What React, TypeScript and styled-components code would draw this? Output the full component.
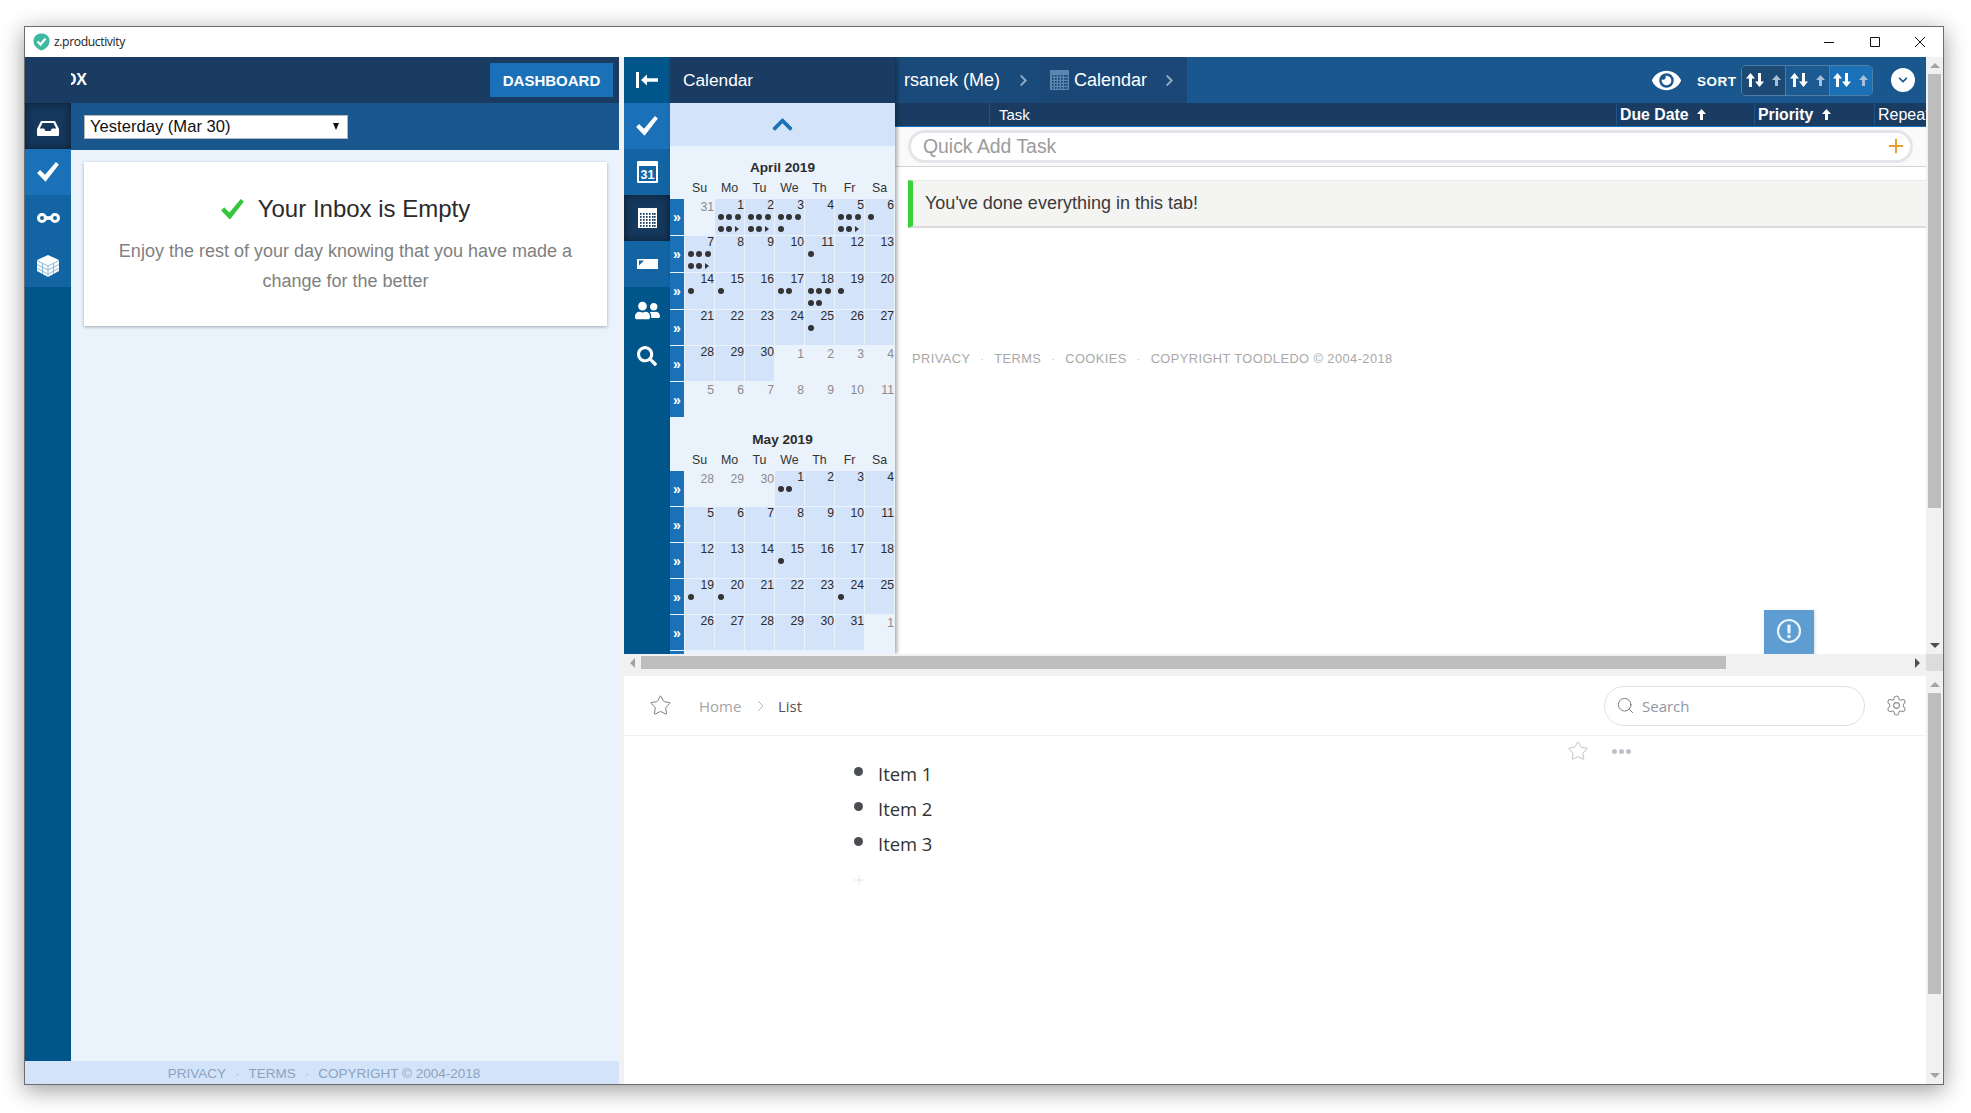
import React from 'react'
import styled, { createGlobalStyle } from 'styled-components'
import { FaEye, FaChevronUp, FaChevronRight, FaChevronDown, FaUserFriends, FaSearch } from 'react-icons/fa'
import { Star, Search, Settings, Plus } from 'lucide-react'

const GlobalStyle = createGlobalStyle`
  html, body {
    margin: 0;
    height: 100%;
    background: #fff;
    overflow: hidden;
  }
  body {
    font-family: "Liberation Sans", Arial, sans-serif;
  }
`

const navy = '#1a3c62'
const mid = '#1a578e'
const bright = '#1a71b8'
const railBlue = '#00568a'
const pale = '#eaf2fc'
const paleBlue = '#d3e3f9'

const Page = styled.div`
  padding: 26px 0 0 24px;
`

const Window = styled.div`
  width: 1918px;
  height: 1057px;
  border: 1px solid #6d6d6d;
  background: #fff;
  box-shadow: 0 5px 22px rgba(0, 0, 0, 0.4);
  display: flex;
  flex-direction: column;
`

const TitleBar = styled.div`
  height: 30px;
  flex: none;
  display: flex;
  align-items: center;
  padding-left: 8px;
`

const AppName = styled.span`
  font-family: "Open Sans", sans-serif;
  font-size: 12.2px;
  letter-spacing: -0.4px;
  color: #222;
  margin: -2px 0 0 4px;
`

const WinButtons = styled.div`
  margin-left: auto;
  display: flex;
`

const WinButton = styled.div`
  width: 45.5px;
  height: 30px;
  display: flex;
  align-items: center;
  justify-content: center;
`

const Body = styled.div`
  flex: 1;
  min-height: 0;
  display: flex;
  background: #f1f1f1;
`

const LeftPanel = styled.section`
  width: 594px;
  flex: none;
  margin-right: 5px;
  display: flex;
  flex-direction: column;
  background: ${pale};
`

const LeftHeader = styled.header`
  height: 46px;
  flex: none;
  background: ${navy};
  display: flex;
  align-items: center;
  padding: 0 6px 0 46px;
`

const ClippedTitle = styled.div`
  width: 16px;
  overflow: hidden;
  display: flex;
  justify-content: flex-end;
  color: #fff;
  font-weight: bold;
  font-size: 16px;
`

const DashboardButton = styled.button`
  margin-left: auto;
  width: 123px;
  height: 34px;
  border: 0;
  padding: 0;
  background: ${bright};
  color: #fff;
  font-family: inherit;
  font-weight: bold;
  font-size: 15px;
`

const LeftMiddle = styled.div`
  flex: 1;
  min-height: 0;
  display: flex;
`

const Rail = styled.nav`
  width: 46px;
  flex: none;
  background: ${railBlue};
  display: flex;
  flex-direction: column;
`

const RailItem = styled.div<{ $tone?: 'active' | 'bright' | 'soft'; $drop?: boolean }>`
  height: 46px;
  flex: none;
  box-sizing: border-box;
  padding-top: ${p => (p.$drop ? '4px' : '0')};
  display: flex;
  align-items: center;
  justify-content: center;
  color: #fff;
  background: ${p =>
    p.$tone === 'active' ? '#15385d' : p.$tone === 'bright' ? bright : p.$tone === 'soft' ? '#1264a3' : railBlue};
  box-shadow: ${p => (p.$tone === 'active' ? 'inset 0 0 8px rgba(0, 0, 0, 0.5)' : 'none')};
`

const LeftContent = styled.div`
  flex: 1;
  min-width: 0;
  display: flex;
  flex-direction: column;
`

const SubBar = styled.div`
  height: 47px;
  flex: none;
  background: ${mid};
  display: flex;
  align-items: center;
  padding-left: 13px;
`

const FakeSelect = styled.div`
  width: 256px;
  height: 22px;
  border: 1px solid #b5b5b5;
  background: #fff;
  color: #111;
  font-size: 16.6px;
  display: flex;
  align-items: center;
  padding: 0 1px 0 5px;
`

const SelectArrow = styled.span`
  margin-left: auto;
  margin-right: 7px;
  width: 0;
  height: 0;
  border-left: 3.5px solid transparent;
  border-right: 3.5px solid transparent;
  border-top: 7px solid #111;
`

const EmptyCard = styled.div`
  margin: 12px 12px 0 13px;
  height: 164px;
  background: #fff;
  box-shadow: 0 1px 3px rgba(0, 0, 0, 0.3);
  text-align: center;
  padding-top: 31px;
  box-sizing: border-box;
`

const EmptyTitle = styled.div`
  font-size: 24px;
  line-height: 32px;
  color: #2b2b2b;
  display: flex;
  justify-content: center;
  align-items: center;
  gap: 14px;
  margin-bottom: 11px;
`

const EmptyText = styled.div`
  font-size: 18px;
  line-height: 30px;
  color: #808080;
`

const FooterBar = styled.footer`
  height: 23px;
  flex: none;
  box-sizing: border-box;
  background: ${paleBlue};
  display: flex;
  align-items: center;
  justify-content: center;
  padding: 1px 0 0 4px;
  font-size: 13.5px;
  color: #8aa3c0;
`

const FooterDot = styled.span<{ $gap: number }>`
  margin: 0 ${p => p.$gap}px;
  opacity: 0.6;
`

const RightColumn = styled.div`
  flex: 1;
  min-width: 0;
  display: flex;
  flex-direction: column;
`

const TopSplit = styled.div`
  height: 597px;
  flex: none;
  display: flex;
  overflow: hidden;
`

const CalendarPanel = styled.aside`
  width: 225px;
  flex: none;
  background: ${pale};
  position: relative;
  z-index: 1;
  box-shadow: 2px 0 4px rgba(0, 0, 0, 0.35);
  overflow: hidden;
`

const CalendarHeader = styled.div`
  height: 46px;
  background: ${navy};
  color: #fff;
  font-size: 17.3px;
  display: flex;
  align-items: center;
  padding-left: 13px;
`

const CollapseBand = styled.div`
  height: 43px;
  background: ${paleBlue};
  display: flex;
  align-items: center;
  justify-content: center;
  color: ${bright};
`

const MonthBlock = styled.div`
  padding-top: 13px;
`

const MonthTitle = styled.div`
  height: 18px;
  line-height: 18px;
  text-align: center;
  font-weight: bold;
  font-size: 13.6px;
  color: #2c2c2c;
`

const DayGrid = styled.div`
  display: grid;
  grid-template-columns: 14px repeat(7, 29px);
  gap: 1px;
  margin-bottom: 1px;
`

const WeekdayName = styled.div`
  height: 18px;
  line-height: 18px;
  margin: 2px 0 1px;
  text-align: center;
  font-size: 12.4px;
  color: #333;
`

const WeekJump = styled.div`
  background: ${bright};
  color: #fff;
  font-weight: bold;
  font-size: 14px;
  display: flex;
  align-items: center;
  justify-content: center;
`

const DayCell = styled.div<{ $other: boolean }>`
  min-height: 35px;
  background: ${p => (p.$other ? pale : paleBlue)};
  color: ${p => (p.$other ? '#8a8a8a' : '#2c2c2c')};
  font-size: 12.2px;
  line-height: 12px;
  text-align: right;
  padding-top: ${p => (p.$other ? '2px' : '0')};
  box-sizing: border-box;
`

const Dots = styled.div`
  display: flex;
  flex-wrap: wrap;
  width: 26px;
  padding-left: 3px;
`

const Dot = styled.i`
  width: 6px;
  height: 6px;
  margin: 3px 2.3px 3px 0;
  border-radius: 50%;
  background: #333;
`

const MoreMark = styled.i`
  width: 0;
  height: 0;
  margin: 3px 0;
  border-left: 4px solid #333;
  border-top: 3px solid transparent;
  border-bottom: 3px solid transparent;
`

const Main = styled.main`
  flex: 1;
  min-width: 0;
  background: #fff;
  position: relative;
  overflow: hidden;
`

const MainHeader = styled.div`
  height: 46px;
  background: ${mid};
  display: flex;
  align-items: center;
  color: #fff;
`

const Crumb = styled.div<{ $bg: string }>`
  width: 146px;
  height: 100%;
  box-sizing: border-box;
  padding-left: 9px;
  background: ${p => p.$bg};
  display: flex;
  align-items: center;
  font-size: 18px;
  white-space: nowrap;
`

const CrumbLabel = styled.span`
  margin-left: 5px;
`

const CrumbArrow = styled(FaChevronRight)<{ $gap: number }>`
  margin-left: ${p => p.$gap}px;
  color: #8fa9c4;
`

const HeaderTools = styled.div`
  margin-left: auto;
  padding-right: 11px;
  display: flex;
  align-items: center;
`

const SortLabel = styled.span`
  font-weight: bold;
  font-size: 13.5px;
  letter-spacing: 0.5px;
  margin: 3px 4px 0 16px;
`

const SortGroup = styled.div`
  display: flex;
  border: 1px solid #4d7ea8;
  border-radius: 5px;
  overflow: hidden;
`

const SortButton = styled.div<{ $bg: string; $divided?: boolean }>`
  width: 43.5px;
  height: 29px;
  box-sizing: border-box;
  background: ${p => p.$bg};
  border-left: ${p => (p.$divided ? '1px solid #4d7ea8' : '0')};
  display: flex;
  align-items: center;
  justify-content: center;
  gap: 8px;
`

const RoundMenu = styled.div`
  width: 24px;
  height: 24px;
  margin-left: 18px;
  border-radius: 50%;
  background: #fff;
  color: ${mid};
  display: flex;
  align-items: center;
  justify-content: center;
`

const ColumnRow = styled.div`
  height: 24px;
  background: ${navy};
  border-bottom: 1px solid ${bright};
  box-sizing: border-box;
  display: grid;
  grid-template-columns: 94px 627px 138px 120px 1fr;
  color: #fff;
  overflow: hidden;
  white-space: nowrap;
`

const ColumnCell = styled.div<{ $bold?: boolean; $inset: number; $size: number }>`
  border-left: 1px solid #1f5488;
  padding-left: ${p => p.$inset}px;
  font-weight: ${p => (p.$bold ? 'bold' : 'normal')};
  font-size: ${p => p.$size}px;
  line-height: 23px;
  display: flex;
  align-items: center;
  gap: 9px;
  &:first-child {
    border-left: 0;
  }
`

const QuickAddBar = styled.div`
  height: 40px;
  box-sizing: border-box;
  background: #fafafa;
  border-bottom: 1px solid #d4d4d4;
  padding: 3px 13px;
`

const QuickAdd = styled.div`
  height: 33px;
  box-sizing: border-box;
  border: 3px solid #e3e5ea;
  border-radius: 17px;
  background: #fff;
  display: flex;
  align-items: center;
  padding: 0 3px 1px 12px;
  font-size: 19.4px;
  color: #9b9b9b;
`

const QuickPlus = styled(Plus)`
  margin-left: auto;
  color: #e8a030;
`

const DoneMessage = styled.div`
  margin: 13px 0 0 13px;
  height: 48px;
  box-sizing: border-box;
  background: #f4f4f3;
  border-left: 5px solid #3bd13b;
  border-top: 1px solid #e8e8e8;
  border-bottom: 2px solid #dcdcdc;
  padding-left: 12px;
  display: flex;
  align-items: center;
  font-size: 18px;
  color: #3a3a3a;
`

const MainFooter = styled.div`
  margin: 123px 0 0 17px;
  font-size: 12.8px;
  letter-spacing: 0.45px;
  color: #a8a8a8;
`

const AlertTab = styled.div`
  position: absolute;
  right: 112px;
  bottom: 0;
  width: 50px;
  height: 44px;
  padding-bottom: 2px;
  box-sizing: border-box;
  background: #5d9dd2;
  box-shadow: 1px 1px 3px rgba(0, 0, 0, 0.15);
  display: flex;
  align-items: center;
  justify-content: center;
`

const VScroll = styled.div`
  width: 17px;
  flex: none;
  background: #f1f1f1;
  display: flex;
  flex-direction: column;
  align-items: center;
`

const ScrollEnd = styled.div`
  width: 17px;
  height: 17px;
  flex: none;
  display: flex;
  align-items: center;
  justify-content: center;
`

const VArrow = styled.i<{ $down?: boolean; $dim?: boolean }>`
  width: 0;
  height: 0;
  border-left: 5px solid transparent;
  border-right: 5px solid transparent;
  ${p => (p.$down ? 'border-top' : 'border-bottom')}: 5px solid ${p => (p.$dim ? '#a3a3a3' : '#505050')};
`

const HArrow = styled.i<{ $right?: boolean }>`
  width: 0;
  height: 0;
  border-top: 5px solid transparent;
  border-bottom: 5px solid transparent;
  ${p => (p.$right ? 'border-left' : 'border-right')}: 5px solid ${p => (p.$right ? '#505050' : '#a3a3a3')};
`

const VThumb = styled.div<{ $size: number }>`
  width: 13px;
  height: ${p => p.$size}px;
  flex: none;
  margin-bottom: auto;
  background: #bdbdbd;
`

const HScroll = styled.div`
  height: 22px;
  flex: none;
  background: #f1f1f1;
  display: flex;
`

const HTrack = styled.div`
  flex: 1;
  height: 17px;
  display: flex;
  align-items: center;
`

const HThumb = styled.div`
  width: 1085px;
  height: 13px;
  margin-right: auto;
  background: #bdbdbd;
`

const ScrollCorner = styled.div`
  width: 17px;
  height: 17px;
  background: #dcdcdc;
`

const BottomSplit = styled.div`
  flex: 1;
  min-height: 0;
  display: flex;
`

const NotesPane = styled.div`
  flex: 1;
  min-width: 0;
  background: #fff;
  font-family: "Open Sans", sans-serif;
`

const NotesBar = styled.div`
  height: 60px;
  box-sizing: border-box;
  border-bottom: 1px solid #f1f1f1;
  display: flex;
  align-items: center;
  padding: 0 18px 0 25px;
`

const FavoriteIcon = styled(Star)`
  margin-right: 27px;
  color: #777;
`

const Breadcrumb = styled.span<{ $current?: boolean }>`
  font-size: 15px;
  color: ${p => (p.$current ? '#555' : '#a5a5a5')};
`

const CrumbChevron = styled.svg`
  margin: 0 13.5px 0 16px;
`

const SearchPill = styled.div`
  margin-left: auto;
  width: 261px;
  height: 40px;
  box-sizing: border-box;
  border: 1px solid #e0e0e0;
  border-radius: 20px;
  display: flex;
  align-items: center;
  gap: 7px;
  padding-left: 11px;
  font-size: 15px;
  color: #8f98a3;
`

const GearIcon = styled(Settings)`
  margin-left: 20px;
  color: #8a8a8a;
`

const NotesBody = styled.div`
  display: flex;
`

const ItemList = styled.div`
  width: 713px;
  padding: 20px 0 0 230px;
`

const Item = styled.div`
  height: 35px;
  display: flex;
  align-items: center;
  gap: 15px;
  font-size: 18.4px;
  color: #333;
`

const Bullet = styled.i`
  width: 9px;
  height: 9px;
  margin-top: -4px;
  border-radius: 50%;
  background: #4a4d52;
`

const AddItem = styled(Plus)`
  margin: 10px 0 0 -4px;
  display: block;
  color: #dedede;
`

const PageActions = styled.div`
  display: flex;
  align-items: center;
  height: 30px;
  color: #bdbdbd;
`

const ActionDots = styled.span`
  display: flex;
  gap: 2px;
  margin-left: 23px;
`

const ActionDot = styled.i`
  width: 5px;
  height: 5px;
  border-radius: 50%;
  background: #bcc2c7;
`

type DayMark = { n: number; more?: boolean }

const aprilMarks: Record<number, DayMark> = {
  1: { n: 5, more: true },
  2: { n: 5, more: true },
  3: { n: 4 },
  5: { n: 5, more: true },
  6: { n: 1 },
  7: { n: 5, more: true },
  11: { n: 1 },
  14: { n: 1 },
  15: { n: 1 },
  17: { n: 2 },
  18: { n: 5 },
  19: { n: 1 },
  25: { n: 1 },
}

const mayMarks: Record<number, DayMark> = {
  1: { n: 2 },
  15: { n: 1 },
  19: { n: 1 },
  20: { n: 1 },
  24: { n: 1 },
}

const weekdays = ['Su', 'Mo', 'Tu', 'We', 'Th', 'Fr', 'Sa']

function Month({ title, year, month, marks }: { title: string; year: number; month: number; marks: Record<number, DayMark> }) {
  const first = new Date(year, month, 1)
  const start = new Date(year, month, 1 - first.getDay())
  const days = Array.from({ length: 42 }, (_, i) => new Date(start.getFullYear(), start.getMonth(), start.getDate() + i))

  return (
    <MonthBlock>
      <MonthTitle>{title}</MonthTitle>
      <DayGrid>
        <span />
        {weekdays.map(d => (
          <WeekdayName key={d}>{d}</WeekdayName>
        ))}
        {days.map((d, i) => {
          const inMonth = d.getMonth() === month
          const mark = inMonth ? marks[d.getDate()] : undefined
          return (
            <React.Fragment key={i}>
              {i % 7 === 0 && <WeekJump>»</WeekJump>}
              <DayCell $other={!inMonth}>
                {d.getDate()}
                {mark && (
                  <Dots>
                    {Array.from({ length: mark.n }, (_, j) => (
                      <Dot key={j} />
                    ))}
                    {mark.more && <MoreMark />}
                  </Dots>
                )}
              </DayCell>
            </React.Fragment>
          )
        })}
      </DayGrid>
    </MonthBlock>
  )
}

const AppLogo = () => (
  <svg width="17" height="18" viewBox="0 0 17 18">
    <path d="M8.5 0.5 C13 0.5 16.5 3 16.5 8 C16.5 13 12 16.5 8.5 17.5 C5 16.5 0.5 13 0.5 8 C0.5 3 4 0.5 8.5 0.5Z" fill="#3fb8a0" />
    <path d="M4.5 8.5 L7.5 11.5 L12.5 5.5" fill="none" stroke="#fff" strokeWidth="2.2" />
  </svg>
)

const CheckIcon = ({ width = 22, color = '#fff' }: { width?: number; color?: string }) => (
  <svg width={width} height={width * 0.9} viewBox="0 0 22 20">
    <path d="M0 11 L3 8 L8 13 L19 0 L22 2.5 L8.5 20 Z" fill={color} />
  </svg>
)

const InboxIcon = () => (
  <svg width="22" height="16" viewBox="0 0 22 16">
    <path
      fillRule="evenodd"
      fill="#fff"
      d="M4 1 H18 L22 9 V15 Q22 16 21 16 H1 Q0 16 0 15 V9 Z M5.5 3 L2.8 8.5 H7 L8.5 11 H13.5 L15 8.5 H19.2 L16.5 3 Z"
    />
  </svg>
)

const LinkIcon = () => (
  <svg width="23" height="10" viewBox="0 0 23 10">
    <circle cx="5" cy="5" r="3.5" fill="none" stroke="#fff" strokeWidth="3" />
    <circle cx="18" cy="5" r="3.5" fill="none" stroke="#fff" strokeWidth="3" />
    <rect x="8" y="3.2" width="7" height="3.6" fill="#fff" />
  </svg>
)

const CubeIcon = () => (
  <svg width="22" height="22" viewBox="0 0 22 22">
    <path d="M11 0 L22 5 V16 L11 22 L0 16 V5 Z" fill="#fff" />
    <path d="M0 9.5 L11 15 L22 9.5 M0 13.5 L11 19 L22 13.5 M0 5.5 L11 11 L22 5.5 M11 11 V22 M5.5 8 V19 M16.5 8 V19" fill="none" stroke="#7fb3d9" strokeWidth="0.9" />
  </svg>
)

const CollapseIcon = () => (
  <svg width="23" height="16" viewBox="0 0 23 16">
    <rect x="0" y="0" width="3" height="16" fill="#fff" />
    <path d="M5 8 L11 2.5 V6.2 H22 V9.8 H11 V13.5 Z" fill="#fff" />
  </svg>
)

const DayIcon = () => (
  <svg width="21" height="22" viewBox="0 0 21 22">
    <rect x="0" y="0" width="21" height="22" rx="1" fill="#fff" />
    <rect x="2" y="5" width="17" height="15" fill="#1264a3" />
    <text x="10.5" y="18" textAnchor="middle" fontFamily="Liberation Sans" fontWeight="bold" fontSize="12.5" fill="#fff">
      31
    </text>
  </svg>
)

const GridIcon = ({ color = '#fff', dot = '#15385d' }: { color?: string; dot?: string }) => (
  <svg width="19" height="20" viewBox="0 0 19 20">
    <rect width="19" height="20" fill={color} />
    {[5, 8, 11, 14, 17].map(y =>
      [2, 5, 8, 11, 14, 16].map(x => <rect key={`${x}-${y}`} x={x} y={y} width="1.6" height="1.8" fill={dot} />)
    )}
  </svg>
)

const TicketIcon = () => (
  <svg width="21" height="10" viewBox="0 0 21 10">
    <rect width="21" height="10" fill="#fff" />
    <path d="M2 1.5 H7 L2 6.5 Z" fill="#1264a3" />
  </svg>
)

const WindowControl = ({ d }: { d: string }) => (
  <svg width="12" height="12" viewBox="0 0 12 12">
    <path d={d} fill="none" stroke="#111" strokeWidth="1" />
  </svg>
)

const AlertIcon = () => (
  <svg width="26" height="26" viewBox="0 0 26 26">
    <circle cx="13" cy="13" r="11" fill="none" stroke="#eaf3fa" strokeWidth="2.2" />
    <rect x="11.4" y="6.5" width="3.2" height="9" rx="1" fill="#eaf3fa" />
    <circle cx="13" cy="18.5" r="1.8" fill="#eaf3fa" />
  </svg>
)

const SmallArrow = ({ color }: { color: string }) => (
  <svg width="9" height="11" viewBox="0 0 9 11">
    <path d="M4.5 0 L9 5 H6 V11 H3 V5 H0 Z" fill={color} />
  </svg>
)

const SortPairIcon = () => (
  <svg width="18" height="14" viewBox="0 0 18 14">
    <path d="M4.5 0 L9 5.5 H6 V14 H3 V5.5 H0 Z M13.5 14 L18 8.5 H15 V0 H12 V8.5 H9 Z" fill="#fff" />
  </svg>
)

const SortChoice = ({ bg, divided }: { bg: string; divided?: boolean }) => (
  <SortButton $bg={bg} $divided={divided}>
    <SortPairIcon />
    <SmallArrow color="#a9c0d6" />
  </SortButton>
)

export default function App() {
  return (
    <Page>
      <GlobalStyle />
      <Window>
        <TitleBar>
          <AppLogo />
          <AppName>z.productivity</AppName>
          <WinButtons>
            <WinButton>
              <WindowControl d="M1 6.5 H11" />
            </WinButton>
            <WinButton>
              <WindowControl d="M1.5 1.5 H10.5 V10.5 H1.5 Z" />
            </WinButton>
            <WinButton>
              <WindowControl d="M1 1 L11 11 M11 1 L1 11" />
            </WinButton>
          </WinButtons>
        </TitleBar>
        <Body>
          <LeftPanel>
            <LeftHeader>
              <ClippedTitle>INBOX</ClippedTitle>
              <DashboardButton>DASHBOARD</DashboardButton>
            </LeftHeader>
            <LeftMiddle>
              <Rail>
                <RailItem $tone="active" $drop>
                  <InboxIcon />
                </RailItem>
                <RailItem $tone="bright">
                  <CheckIcon />
                </RailItem>
                <RailItem $tone="soft">
                  <LinkIcon />
                </RailItem>
                <RailItem $tone="soft" $drop>
                  <CubeIcon />
                </RailItem>
              </Rail>
              <LeftContent>
                <SubBar>
                  <FakeSelect>
                    Yesterday (Mar 30)
                    <SelectArrow />
                  </FakeSelect>
                </SubBar>
                <EmptyCard>
                  <EmptyTitle>
                    <CheckIcon width={23} color="#35c63b" />
                    Your Inbox is Empty
                  </EmptyTitle>
                  <EmptyText>
                    Enjoy the rest of your day knowing that you have made a
                    <br />
                    change for the better
                  </EmptyText>
                </EmptyCard>
              </LeftContent>
            </LeftMiddle>
            <FooterBar>
              PRIVACY
              <FooterDot $gap={9}>·</FooterDot>
              TERMS
              <FooterDot $gap={9}>·</FooterDot>
              COPYRIGHT © 2004-2018
            </FooterBar>
          </LeftPanel>
          <RightColumn>
            <TopSplit>
              <Rail>
                <RailItem>
                  <CollapseIcon />
                </RailItem>
                <RailItem $tone="bright">
                  <CheckIcon />
                </RailItem>
                <RailItem $tone="soft">
                  <DayIcon />
                </RailItem>
                <RailItem $tone="active">
                  <GridIcon />
                </RailItem>
                <RailItem $tone="soft">
                  <TicketIcon />
                </RailItem>
                <RailItem>
                  <FaUserFriends size={25} />
                </RailItem>
                <RailItem>
                  <FaSearch size={20} />
                </RailItem>
              </Rail>
              <CalendarPanel>
                <CalendarHeader>Calendar</CalendarHeader>
                <CollapseBand>
                  <FaChevronUp size={23} />
                </CollapseBand>
                <Month title="April 2019" year={2019} month={3} marks={aprilMarks} />
                <Month title="May 2019" year={2019} month={4} marks={mayMarks} />
              </CalendarPanel>
              <Main>
                <MainHeader>
                  <Crumb $bg="#1a4a79">
                    rsanek (Me)
                    <CrumbArrow size={13} $gap={17} />
                  </Crumb>
                  <Crumb $bg="#1a4775">
                    <GridIcon color="#5b86b0" dot="#1a4775" />
                    <CrumbLabel>Calendar</CrumbLabel>
                    <CrumbArrow size={13} $gap={16} />
                  </Crumb>
                  <HeaderTools>
                    <FaEye size={29} />
                    <SortLabel>SORT</SortLabel>
                    <SortGroup>
                      <SortChoice bg="#1d4a75" />
                      <SortChoice bg="#1c5a92" divided />
                      <SortChoice bg={bright} divided />
                    </SortGroup>
                    <RoundMenu>
                      <FaChevronDown size={10} />
                    </RoundMenu>
                  </HeaderTools>
                </MainHeader>
                <ColumnRow>
                  <ColumnCell $inset={0} $size={15} />
                  <ColumnCell $inset={9} $size={15}>
                    Task
                  </ColumnCell>
                  <ColumnCell $bold $inset={3} $size={15.8}>
                    Due Date
                    <SmallArrow color="#fff" />
                  </ColumnCell>
                  <ColumnCell $bold $inset={3} $size={15.8}>
                    Priority
                    <SmallArrow color="#fff" />
                  </ColumnCell>
                  <ColumnCell $inset={3} $size={16}>
                    Repeat
                  </ColumnCell>
                </ColumnRow>
                <QuickAddBar>
                  <QuickAdd>
                    Quick Add Task
                    <QuickPlus size={22} strokeWidth={2.2} />
                  </QuickAdd>
                </QuickAddBar>
                <DoneMessage>You've done everything in this tab!</DoneMessage>
                <MainFooter>
                  PRIVACY
                  <FooterDot $gap={9.6}>·</FooterDot>
                  TERMS
                  <FooterDot $gap={9.6}>·</FooterDot>
                  COOKIES
                  <FooterDot $gap={9.6}>·</FooterDot>
                  COPYRIGHT TOODLEDO © 2004-2018
                </MainFooter>
                <AlertTab>
                  <AlertIcon />
                </AlertTab>
              </Main>
              <VScroll>
                <ScrollEnd>
                  <VArrow $dim />
                </ScrollEnd>
                <VThumb $size={434} />
                <ScrollEnd>
                  <VArrow $down />
                </ScrollEnd>
              </VScroll>
            </TopSplit>
            <HScroll>
              <HTrack>
                <ScrollEnd>
                  <HArrow />
                </ScrollEnd>
                <HThumb />
                <ScrollEnd>
                  <HArrow $right />
                </ScrollEnd>
              </HTrack>
              <ScrollCorner />
            </HScroll>
            <BottomSplit>
              <NotesPane>
                <NotesBar>
                  <FavoriteIcon size={23} strokeWidth={1} />
                  <Breadcrumb>Home</Breadcrumb>
                  <CrumbChevron width="7" height="12" viewBox="0 0 7 12">
                    <path d="M1 1 L6 6 L1 11" fill="none" stroke="#b5b5b5" strokeWidth="1" />
                  </CrumbChevron>
                  <Breadcrumb $current>List</Breadcrumb>
                  <SearchPill>
                    <Search size={19} strokeWidth={1.2} color="#777" />
                    Search
                  </SearchPill>
                  <GearIcon size={23} strokeWidth={1.1} />
                </NotesBar>
                <NotesBody>
                  <ItemList>
                    <Item>
                      <Bullet />
                      Item 1
                    </Item>
                    <Item>
                      <Bullet />
                      Item 2
                    </Item>
                    <Item>
                      <Bullet />
                      Item 3
                    </Item>
                    <AddItem size={18} strokeWidth={1} />
                  </ItemList>
                  <PageActions>
                    <Star size={22} strokeWidth={1} />
                    <ActionDots>
                      <ActionDot />
                      <ActionDot />
                      <ActionDot />
                    </ActionDots>
                  </PageActions>
                </NotesBody>
              </NotesPane>
              <VScroll>
                <ScrollEnd>
                  <VArrow $dim />
                </ScrollEnd>
                <VThumb $size={301} />
                <ScrollEnd>
                  <VArrow $down $dim />
                </ScrollEnd>
              </VScroll>
            </BottomSplit>
          </RightColumn>
        </Body>
      </Window>
    </Page>
  )
}
